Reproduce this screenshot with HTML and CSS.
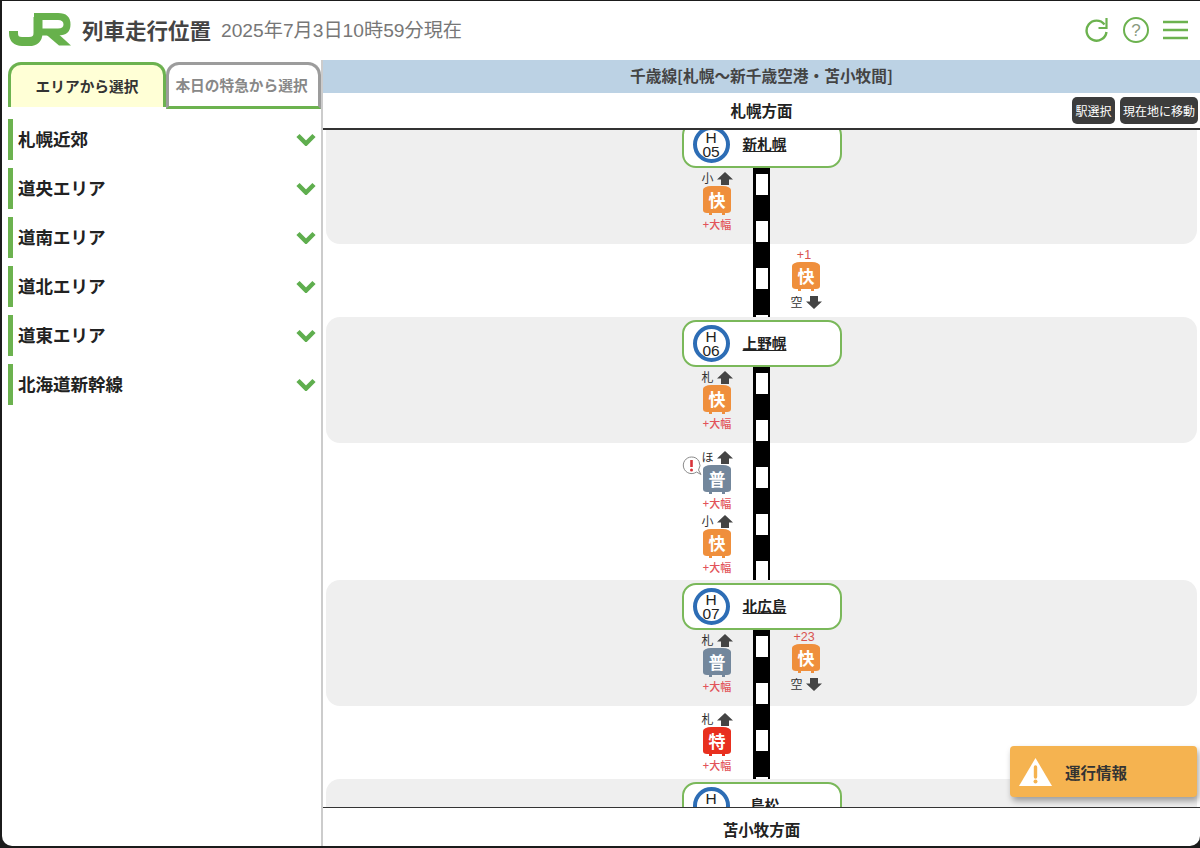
FILE: index.html
```html
<!DOCTYPE html>
<html lang="ja">
<head>
<meta charset="utf-8">
<title>列車走行位置</title>
<link rel="stylesheet" href="styles.css">
</head>
<body>
<svg class="defs" aria-hidden="true"><defs>
  <symbol id="up" viewBox="0 0 16 13"><path d="M8 0 16 7.500H12V13H4V7.500H0Z"/></symbol>
  <symbol id="down" viewBox="0 0 16 13"><path d="M8 13 16 5.500H12V0H4V5.500H0Z"/></symbol>
  <symbol id="chev" viewBox="0 0 20 13"><path d="M2 2.500 10 10.500 18 2.500" fill="none" stroke="currentColor" stroke-width="4.500"/></symbol>
</defs></svg>
<div class="app">
  <header class="top">
    <svg class="logo" viewBox="0 0 62 33" width="62" height="33" aria-label="JR">
      <g fill="none" stroke="#67b14c">
        <path stroke-width="9" d="M4.500 18V20Q4.500 28.500 13 28.500H20Q29 28.500 29 20V4"/>
        <path stroke-width="7" d="M25 3.500H49Q58 3.500 58 11.500Q58 19 49 19H33"/>
      </g>
      <path fill="#67b14c" d="M33 18H46L62 32.500H50Z"/>
    </svg>
    <h1 class="title">列車走行位置</h1>
    <span class="now">2025年7月3日10時59分現在</span>
    <div class="tools">
      <svg class="tool" width="24" height="26" viewBox="0 0 24 26" fill="none" stroke="#6cb24f" stroke-width="2.400">
        <path d="M19.500 7.500A10 10 0 1 0 21.500 15"/>
        <path d="M13.500 11H21.500V1" stroke-width="2.200"/>
      </svg>
      <svg class="tool help" width="28" height="28" viewBox="0 0 28 28">
        <circle cx="14" cy="14" r="12" fill="none" stroke="#6cb24f" stroke-width="2"/>
        <text x="14" y="20" text-anchor="middle">?</text>
      </svg>
      <svg class="tool" width="26" height="20" viewBox="0 0 26 20" stroke="#6cb24f" stroke-width="2.600">
        <path d="M0 2H25M0 10H25M0 18H25"/>
      </svg>
    </div>
  </header>
  <div class="body">
    <aside class="side">
      <div class="tabs">
        <div class="tab on">エリアから選択</div>
        <div class="tab off">本日の特急から選択</div>
      </div>
      <ul class="areas">
        <li class="area">札幌近郊<svg class="chev"><use href="#chev"/></svg></li>
        <li class="area">道央エリア<svg class="chev"><use href="#chev"/></svg></li>
        <li class="area">道南エリア<svg class="chev"><use href="#chev"/></svg></li>
        <li class="area">道北エリア<svg class="chev"><use href="#chev"/></svg></li>
        <li class="area">道東エリア<svg class="chev"><use href="#chev"/></svg></li>
        <li class="area">北海道新幹線<svg class="chev"><use href="#chev"/></svg></li>
      </ul>
    </aside>
    <main class="main">
      <div class="line-name">千歳線[札幌〜新千歳空港・苫小牧間]</div>
      <div class="dir dir-top">
        <span>札幌方面</span>
        <div class="btns"><button class="btn">駅選択</button><button class="btn">現在地に移動</button></div>
      </div>
      <div class="view">
        <div class="list">

          <section class="band">
            <div class="station"><div class="num">H<br>05</div><a class="st-name">新札幌</a></div>
            <div class="seg">
              <div class="lane left p2">
                <div class="tr">
                  <div class="way"><span>小</span><svg class="arrow"><use href="#up"/></svg></div>
                  <div class="car rapid">快</div>
                  <div class="late">+大幅</div>
                </div>
              </div>
              <div class="track"></div>
              <div class="lane"></div>
            </div>
          </section>

          <div class="seg gap g73">
            <div class="lane left"></div>
            <div class="track mid"></div>
            <div class="lane p4">
              <div class="tr">
                <div class="late top">+1</div>
                <div class="car rapid">快</div>
                <div class="way below"><span>空</span><svg class="arrow"><use href="#down"/></svg></div>
              </div>
            </div>
          </div>

          <section class="band">
            <div class="station"><div class="num">H<br>06</div><a class="st-name">上野幌</a></div>
            <div class="seg">
              <div class="lane left p2">
                <div class="tr">
                  <div class="way"><span>札</span><svg class="arrow"><use href="#up"/></svg></div>
                  <div class="car rapid">快</div>
                  <div class="late">+大幅</div>
                </div>
              </div>
              <div class="track"></div>
              <div class="lane"></div>
            </div>
          </section>

          <div class="seg gap g137">
            <div class="lane left p6">
              <div class="tr">
                <div class="way"><span>ほ</span><svg class="arrow"><use href="#up"/></svg></div>
                <div class="car local">普
                  <svg class="notice" width="21" height="20" viewBox="0 0 21 20">
                    <path d="M9.500 1A8.300 8.300 0 1 0 14.500 16L19 18.500 16.500 14A8.300 8.300 0 0 0 9.500 1Z" fill="#fff" stroke="#8a8a8a" stroke-width="1"/>
                    <path d="M9.500 4V11" stroke="#d8333a" stroke-width="2.600"/>
                    <circle cx="9.500" cy="14" r="1.500" fill="#d8333a"/>
                  </svg>
                </div>
                <div class="late">+大幅</div>
              </div>
              <div class="tr">
                <div class="way"><span>小</span><svg class="arrow"><use href="#up"/></svg></div>
                <div class="car rapid">快</div>
                <div class="late">+大幅</div>
              </div>
            </div>
            <div class="track mid"></div>
            <div class="lane"></div>
          </div>

          <section class="band">
            <div class="station"><div class="num">H<br>07</div><a class="st-name">北広島</a></div>
            <div class="seg">
              <div class="lane left p2">
                <div class="tr">
                  <div class="way"><span>札</span><svg class="arrow"><use href="#up"/></svg></div>
                  <div class="car local">普</div>
                  <div class="late">+大幅</div>
                </div>
              </div>
              <div class="track"></div>
              <div class="lane">
                <div class="tr">
                  <div class="late top">+23</div>
                  <div class="car rapid">快</div>
                  <div class="way below"><span>空</span><svg class="arrow"><use href="#down"/></svg></div>
                </div>
              </div>
            </div>
          </section>

          <div class="seg gap g73">
            <div class="lane left p5">
              <div class="tr">
                <div class="way"><span>札</span><svg class="arrow"><use href="#up"/></svg></div>
                <div class="car limited">特</div>
                <div class="late">+大幅</div>
              </div>
            </div>
            <div class="track mid"></div>
            <div class="lane"></div>
          </div>

          <section class="band">
            <div class="station"><div class="num">H<br>08</div><a class="st-name">鳥松</a></div>
          </section>

        </div>
      </div>
      <div class="dir dir-bottom"><span>苫小牧方面</span></div>
      <div class="alert">
        <svg width="33" height="30" viewBox="0 0 33 30">
          <path d="M16.500 1 33 29H0Z" fill="#fff"/>
          <path d="M16.500 10V20" stroke="#f5b350" stroke-width="3.400" stroke-linecap="round"/>
          <circle cx="16.500" cy="24.500" r="2" fill="#f5b350"/>
        </svg>
        <span>運行情報</span>
      </div>
    </main>
  </div>
</div>
</body>
</html>
```

FILE: styles.css
```css
* { box-sizing: border-box; }
html, body { height: 100%; margin: 0; }
body {
  background: #1b1b1b;
  overflow: hidden;
  font-family: "Noto Sans CJK JP", "Liberation Sans", sans-serif;
  color: #222;
}
.defs { width: 0; height: 0; display: block; position: absolute; }
.app {
  margin: 1px 0 0 2px;
  width: 1198px;
  height: 845px;
  background: #fff;
  border-radius: 0 0 10px 10px;
  overflow: hidden;
  display: flex;
  flex-direction: column;
}
.top {
  height: 59px;
  flex: none;
  display: flex;
  align-items: center;
  padding: 0 11px 0 7px;
}
.logo { flex: none; margin-bottom: 3px; }
.title {
  margin: 0 0 2px 11px;
  font-size: 21.500px;
  line-height: 30px;
  font-weight: 700;
  color: #444;
}
.now {
  margin: 0 0 4px 10px;
  font-size: 19.200px;
  color: #777;
  font-family: "Liberation Sans", "Noto Sans CJK JP", sans-serif;
}
.tools { margin: 0 0 1px auto; display: flex; align-items: center; gap: 13px; }
.tool { display: block; }
.help text { font: 400 17px "Liberation Sans", sans-serif; fill: #8a9a80; }

.body { flex: 1; min-height: 0; display: flex; }
.side {
  width: 321px;
  flex: none;
  padding: 2px 0 0 6px;
  border-right: 2px solid #ccc;
}
.tabs { display: flex; height: 47px; }
.tab {
  height: 47px;
  display: flex;
  align-items: center;
  justify-content: center;
  font-size: 14.700px;
  font-weight: 700;
  white-space: nowrap;
  border-radius: 13px 13px 0 0;
  padding-bottom: 3px;
}
.tab.on {
  width: 158px;
  background: #ffffd6;
  border: 3px solid #6cb24f;
  border-bottom: 0;
  color: #333;
  height: 45px;
  padding-bottom: 1px;
  align-self: flex-start;
}
.tab.off {
  width: 155px;
  color: #888;
  border: 3px solid #9c9c9c;
  border-bottom: 3px solid #6cb24f;
  border-radius: 13px 13px 0 0;
  padding-right: 4px;
}
.areas { list-style: none; margin: 10px 0 0; padding: 0; display: flex; flex-direction: column; gap: 8px; }
.area {
  height: 41px;
  border-left: 5px solid #6cb24f;
  padding: 0 5px 3px 5px;
  display: flex;
  align-items: center;
  justify-content: space-between;
  font-size: 17.500px;
  font-weight: 700;
  color: #222;
}
.chev { width: 20px; height: 13px; color: #5fae4e; margin-top: 3px; }

.main { flex: 1; min-width: 0; display: flex; flex-direction: column; position: relative; }
.line-name {
  height: 33px;
  flex: none;
  background: #bcd2e4;
  display: flex;
  align-items: center;
  justify-content: center;
  font-size: 15.700px;
  font-weight: 700;
  color: #444;
  padding-bottom: 2px;
}
.dir {
  flex: none;
  display: flex;
  align-items: center;
  justify-content: center;
  font-size: 15.500px;
  font-weight: 700;
  color: #222;
  position: relative;
}
.dir-top { height: 37px; border-bottom: 2px solid #333; padding-bottom: 2px; }
.dir-bottom { height: 39px; border-top: 1px solid #333; padding-top: 4px; }
.btns { position: absolute; right: 2px; top: 4px; display: flex; gap: 5px; }
.btn {
  height: 27px;
  padding: 0 3px;
  border: 0;
  border-radius: 5px;
  background: #3c3c3c;
  color: #fff;
  font: 400 12px/25px "Noto Sans CJK JP", sans-serif;
}
.btn:first-child { padding: 0 3.500px; }

.view { flex: 1; min-height: 0; overflow: hidden; }
.list { margin-top: -12px; }
.band {
  margin: 0 3px;
  height: 126px;
  background: #efefef;
  border-radius: 14px;
  padding-top: 3px;
}
.station {
  width: 160px;
  height: 47px;
  margin: 0 auto;
  display: flex;
  align-items: center;
  gap: 13px;
  padding-left: 9px;
  border: 2px solid #7ab85a;
  border-radius: 14px;
  background: #fff;
}
.num {
  width: 37px;
  height: 37px;
  flex: none;
  border: 4px solid #2d6db5;
  border-radius: 50%;
  background: #fff;
  font: 400 15.500px/13.500px "Liberation Sans", sans-serif;
  text-align: center;
  color: #222;
  padding-top: 1px;
}
.st-name {
  width: 44px;
  text-align: center;
  font-size: 14.600px;
  font-weight: 700;
  color: #222;
  text-decoration: underline;
  white-space: nowrap;
  margin-bottom: 2px;
}
.seg {
  height: 76px;
  display: grid;
  grid-template-columns: 1fr 17px 1fr;
}
.band .seg { margin: 0 -3px; }
.g73 { height: 73px; }
.g137 { height: 137px; }
.track {
  border-left: 3px solid #000;
  border-right: 2px solid #000;
  background: linear-gradient(#000 0 6px, #fff 6px 27px, #000 27px) 0 0 / 100% 47px repeat-y;
}
.track.mid { background-position: 0 18px; }
.lane { display: flex; flex-direction: column; align-items: flex-start; padding-left: 16px; }
.lane.left { align-items: flex-end; padding-left: 0; padding-right: 16px; }
.p2 { padding-top: 2px; }
.p4 { padding-top: 4px; }
.p5 { padding-top: 5px; }
.p6 { padding-top: 6px; }
.tr { width: 40px; margin-bottom: 3px; display: flex; flex-direction: column; align-items: center; }
.way {
  height: 16px;
  display: flex;
  align-items: center;
  gap: 3px;
  font-size: 12px;
  line-height: 16px;
  color: #333;
}
.way.below { margin-top: 3px; }
.arrow { width: 16px; height: 13px; fill: #444; }
.car {
  width: 28px;
  height: 29px;
  position: relative;
  isolation: isolate;
  text-align: center;
  color: #fff;
  font-size: 17px;
  font-weight: 700;
  line-height: 27px;
}
.car::before {
  content: "";
  position: absolute;
  z-index: -1;
  left: 0; right: 0; top: 0;
  height: 27px;
  background: var(--c);
  border-radius: 8px 8px 4px 4px / 4px 4px 3px 3px;
}
.car::after {
  content: "";
  position: absolute;
  left: 6px; right: 6px; bottom: 0;
  height: 2px;
  border-left: 3px solid var(--c);
  border-right: 3px solid var(--c);
}
.rapid { --c: #ef8f3c; }
.local { --c: #73879c; }
.limited { --c: #e8301f; }
.late { height: 14px; margin-top: 2px; font-size: 11px; font-weight: 500; line-height: 14px; color: #e2535a; white-space: nowrap; }
.late.top { margin-top: 0; font-family: "Liberation Sans", sans-serif; font-weight: 400; font-size: 12.500px; color: #d9534f; }
.notice { position: absolute; left: -21px; top: -9px; }

.alert {
  position: absolute;
  right: 3px;
  bottom: 49px;
  width: 187px;
  height: 51px;
  background: #f5b350;
  border-radius: 4px;
  box-shadow: 2px 4px 6px rgba(0,0,0,.35);
  display: flex;
  align-items: center;
  gap: 13px;
  padding-left: 9px;
  font-size: 15.500px;
  font-weight: 700;
  color: #333;
}
```
